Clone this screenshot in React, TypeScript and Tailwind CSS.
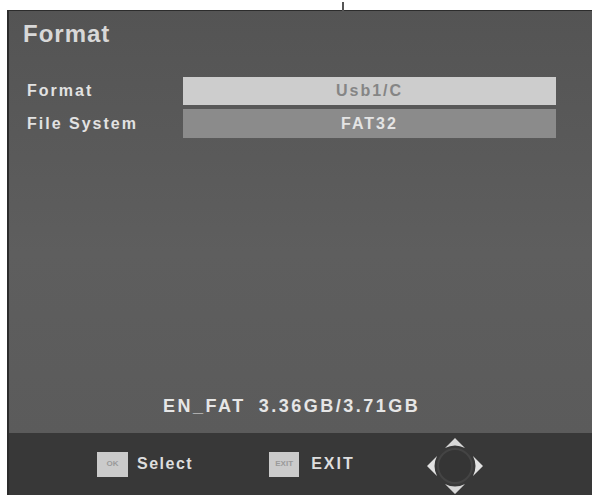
import React from "react";

const font = { fontFamily: '"Liberation Sans", Arial, sans-serif' };

function Dpad() {
  return (
    <svg width="62" height="64" viewBox="0 0 62 64">
      <circle cx="31" cy="32" r="17" fill="#353535" stroke="#444" strokeWidth="2" />
      <path d="M31 4 L41 14 Q31 9 21 14 Z" fill="#d8d8d8" />
      <path d="M31 60 L41 50 Q31 55 21 50 Z" fill="#d8d8d8" />
      <path d="M3 32 L13 22 Q8 32 13 42 Z" fill="#e2e2e2" />
      <path d="M59 32 L49 22 Q54 32 49 42 Z" fill="#e2e2e2" />
    </svg>
  );
}

export default function App() {
  return (
    <div className="relative w-[595px] h-[495px] bg-white overflow-hidden pl-[7px] pt-[10px] pr-[3px]" style={font}>
      <div className="absolute left-[342px] top-[2px] w-[2px] h-[10px] bg-[#555]" />
      <div className="flex flex-col h-full border-l-2 border-t border-[#2c2c2c] bg-gradient-to-b from-[#545454] via-[#5e5e5e] to-[#5a5a5a]">
        <div className="pl-[14px] pt-[8px] h-[66px] text-[24px] leading-[30px] font-bold tracking-[1px] text-[#d8d8d8]">
          Format
        </div>
        <div className="flex flex-col gap-[4px]">
          <div className="flex items-center h-[28px]">
            <div className="w-[174px] pl-[18px] text-[16px] font-bold tracking-[2px] text-[#e2e2e2]">Format</div>
            <div className="w-[373px] h-full bg-[#cdcdcd] flex items-center justify-center text-[16px] font-bold tracking-[2px] text-[#858585]">
              Usb1/C
            </div>
          </div>
          <div className="flex items-center h-[29px]">
            <div className="w-[174px] pl-[18px] text-[16px] font-bold tracking-[2px] text-[#e2e2e2]">File System</div>
            <div className="w-[373px] h-full bg-[#8b8b8b] flex items-center justify-center text-[16px] font-bold tracking-[2px] text-[#e4e4e4]">
              FAT32
            </div>
          </div>
        </div>
        <div className="flex-1" />
        <div className="flex items-center h-[30px] mb-[12px] pl-[154px] text-[18px] font-bold tracking-[2.5px] text-[#e6e6e6]">
          <span>EN_FAT</span>
          <span className="ml-[13px]">3.36GB/3.71GB</span>
        </div>
        <div className="h-[62px] bg-[#383838] flex items-center pl-[88px]">
          <div className="w-[31px] h-[25px] bg-[#cbcbcb] flex items-center justify-center text-[8px] font-bold text-[#9a9a9a]">OK</div>
          <span className="ml-[9px] text-[16px] font-bold tracking-[1.5px] text-[#dedede]">Select</span>
          <div className="ml-[76px] w-[30px] h-[25px] bg-[#cbcbcb] flex items-center justify-center text-[8px] font-bold text-[#9a9a9a]">EXIT</div>
          <span className="ml-[12px] text-[16px] font-bold tracking-[2px] text-[#dedede]">EXIT</span>
          <div className="ml-[69px] mt-[4px]">
            <Dpad />
          </div>
        </div>
      </div>
    </div>
  );
}
